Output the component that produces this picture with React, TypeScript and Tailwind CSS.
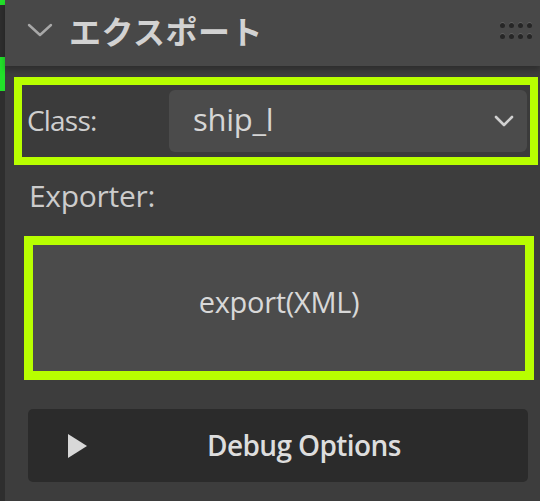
import React from "react";

export default function App() {
  const font = { fontFamily: '"Open Sans", "Noto Sans", "Noto Sans CJK JP", sans-serif' };
  return (
    <div className="w-[540px] h-[501px] bg-[#3d3d3d] flex overflow-hidden" style={font}>
      <div className="w-[5px] bg-[#2e2e2e] flex flex-col shrink-0">
        <div className="h-[5px] bg-[#22e02a]" />
        <div className="h-[52px]" />
        <div className="h-[34px] bg-[#22e02a]" />
        <div className="flex-1" />
      </div>
      <div className="flex-1 flex flex-col">
        <div className="h-[66px] bg-[#484848] flex items-center pb-[6px] pl-[21px] pr-[8px] shadow-[0_4px_6px_rgba(0,0,0,0.25)]">
          <svg width="28" height="18" viewBox="0 0 28 18" className="shrink-0">
            <path d="M3 4 L14 14 L25 4" fill="none" stroke="#a8a8a8" strokeWidth="2.4" strokeLinecap="round" strokeLinejoin="round" />
          </svg>
          <span className="ml-[15px] text-[32px] leading-none font-bold text-[#d2d2d2] tracking-[0.5px]" style={{ fontFamily: '"Noto Sans CJK JP", sans-serif' }}>
            エクスポート
          </span>
          <div className="ml-auto grid grid-cols-4 gap-x-[4px] gap-y-[6px] mt-[2px]">
            {Array.from({ length: 8 }).map((_, i) => (
              <div key={i} className="w-[5px] h-[5px] rounded-full bg-[#262626] shadow-[0_-1px_0_rgba(255,255,255,0.12)]" />
            ))}
          </div>
        </div>
        <div className="flex flex-col pt-[11px]">
          <div className="ml-[9px] mr-[2px] h-[88px] border-[8px] border-[#b8ff00] bg-[#3b3b3b] flex items-center pl-[5px] pr-[3px]">
            <span className="text-[28px] text-[#cfcfcf] tracking-[-0.8px] w-[142px] pb-[2px]">Class:</span>
            <div className="flex-1 h-[62px] rounded-[6px] bg-[#4b4b4b] flex items-center pl-[24px] pr-[12px]">
              <span className="text-[31px] text-[#d6d6d6] tracking-[-0.3px] pb-[4px]">ship_l</span>
              <svg width="22" height="14" viewBox="0 0 22 14" className="ml-auto">
                <path d="M3 3 L11 11 L19 3" fill="none" stroke="#d0d0d0" strokeWidth="2.6" strokeLinecap="round" strokeLinejoin="round" />
              </svg>
            </div>
          </div>
          <div className="ml-[24px] mt-[12px] h-[36px] flex items-center text-[30px] text-[#cccccc] tracking-[-0.3px]">Exporter:</div>
          <div className="ml-[19px] mr-[6px] mt-[23px] h-[144px] border-[9px] border-[#b8ff00] bg-[#4b4b4b] flex items-center justify-center">
            <span className="text-[29px] text-[#d8d8d8] tracking-[-0.3px] pb-[12px]">export(XML)</span>
          </div>
          <div className="ml-[23px] mr-[12px] mt-[29px] h-[73px] rounded-[5px] bg-[#2b2b2b] flex items-center pl-[39px]">
            <svg width="21" height="26" viewBox="0 0 21 26" className="shrink-0">
              <path d="M1 1 L20 13 L1 25 Z" fill="#d8d8d8" />
            </svg>
            <span className="ml-[119px] pb-[2px] text-[28px] text-[#dddddd] tracking-[-0.6px] font-semibold whitespace-nowrap">Debug Options</span>
          </div>
        </div>
      </div>
    </div>
  );
}
